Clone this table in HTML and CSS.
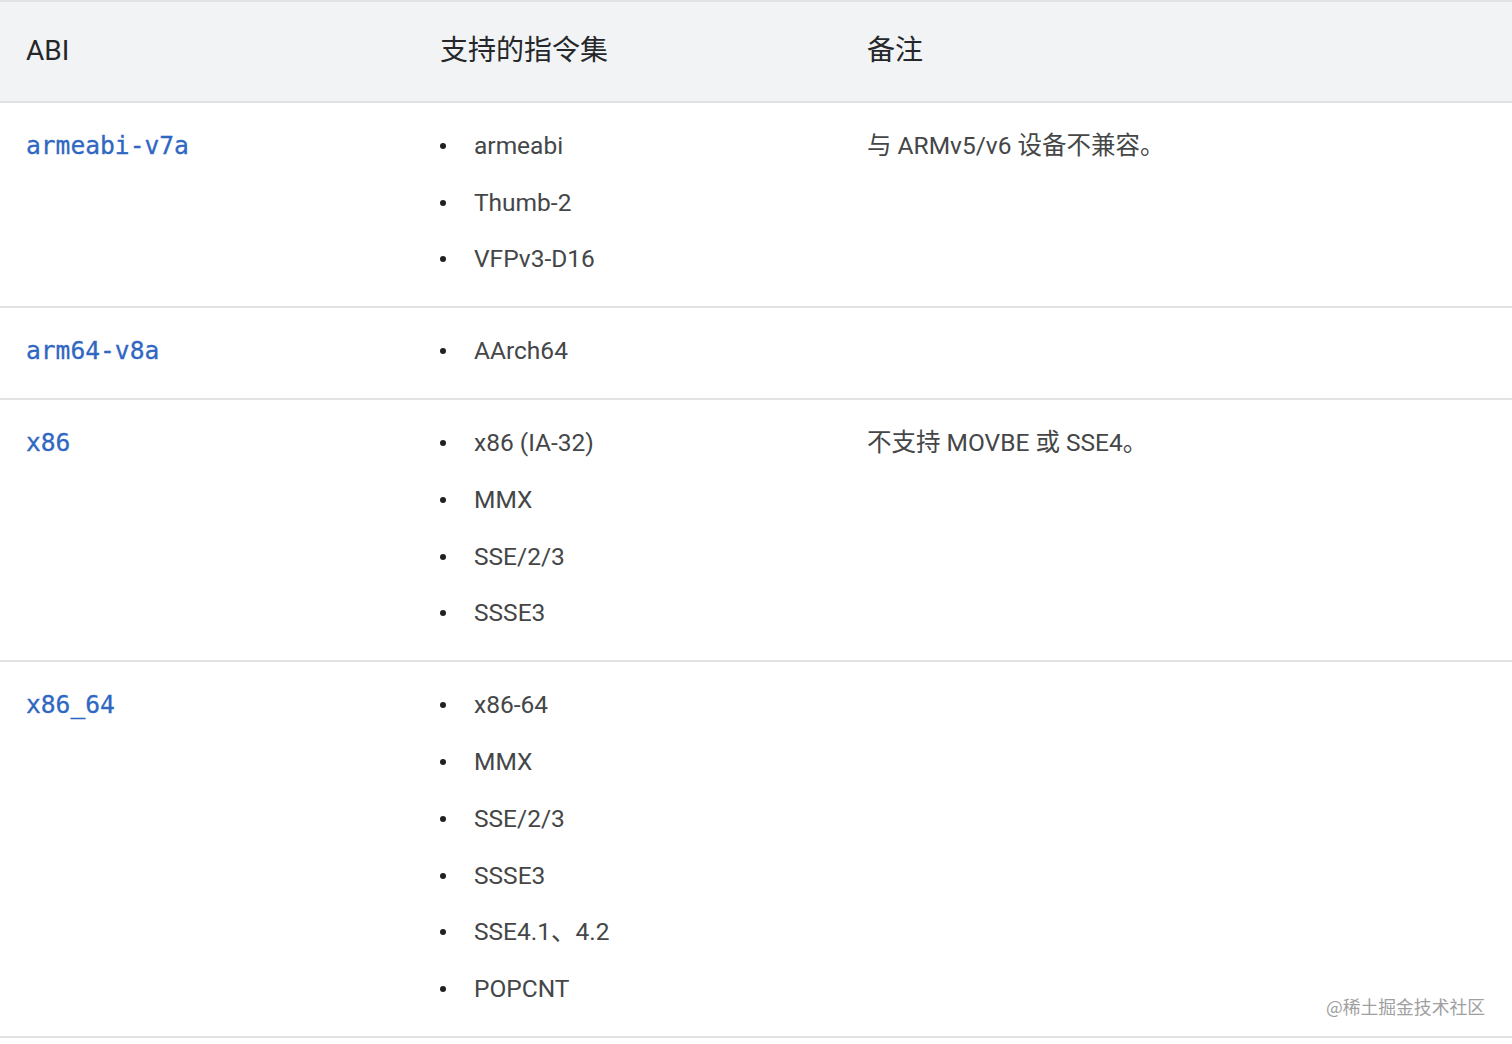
FILE: index.html
```html
<!DOCTYPE html>
<html lang="zh-CN">
<head>
<meta charset="utf-8">
<title>ABI</title>
<link rel="stylesheet" href="styles.css">
</head>
<body>
<div class="page">
  <table class="abi-table">
    <colgroup>
      <col class="c1">
      <col class="c2">
      <col class="c3">
    </colgroup>
    <thead>
      <tr>
        <th>ABI</th>
        <th>支持的指令集</th>
        <th>备注</th>
      </tr>
    </thead>
    <tbody>
      <tr>
        <td><code>armeabi-v7a</code></td>
        <td>
          <ul class="list">
            <li>armeabi</li>
            <li>Thumb-2</li>
            <li>VFPv3-D16</li>
          </ul>
        </td>
        <td><p class="note">与 ARMv5/v6 设备不兼容。</p></td>
      </tr>
      <tr>
        <td><code>arm64-v8a</code></td>
        <td>
          <ul class="list">
            <li>AArch64</li>
          </ul>
        </td>
        <td></td>
      </tr>
      <tr>
        <td><code>x86</code></td>
        <td>
          <ul class="list">
            <li>x86 (IA-32)</li>
            <li>MMX</li>
            <li>SSE/2/3</li>
            <li>SSSE3</li>
          </ul>
        </td>
        <td><p class="note">不支持 MOVBE 或 SSE4。</p></td>
      </tr>
      <tr>
        <td><code>x86_64</code></td>
        <td>
          <ul class="list">
            <li>x86-64</li>
            <li>MMX</li>
            <li>SSE/2/3</li>
            <li>SSSE3</li>
            <li>SSE4.1、4.2</li>
            <li>POPCNT</li>
          </ul>
        </td>
        <td></td>
      </tr>
    </tbody>
  </table>
  <div class="watermark">@稀土掘金技术社区</div>
</div>
</body>
</html>
```
FILE: styles.css
```css
html, body {
  margin: 0;
  padding: 0;
  background: #ffffff;
}

body {
  font-family: Roboto, "Noto Sans CJK SC", sans-serif;
  color: #444648;
}

.page {
  position: relative;
  width: 1512px;
  height: 1044px;
  overflow: hidden;
}

.abi-table {
  width: 1512px;
  border-collapse: collapse;
  table-layout: fixed;
  border-top: 2px solid #e1e2e4;
}

.c1 { width: 414px; }
.c2 { width: 427px; }
.c3 { width: auto; }

.abi-table th {
  background: #f1f3f4;
  color: #25272a;
  font-weight: 400;
  font-size: 28px;
  line-height: 38px;
  text-align: left;
  padding: 30px 26px 31px 26px;
  border-bottom: 2px solid #e1e2e4;
  vertical-align: middle;
}

.abi-table td {
  vertical-align: top;
  padding: 24px 26px 28px 26px;
  border-bottom: 2px solid #e1e2e4;
  font-size: 24.5px;
  line-height: 38px;
}

code {
  font-family: "DejaVu Sans Mono", "Liberation Mono", monospace;
  font-size: 24.6px;
  line-height: 38px;
  color: #2f67c2;
  display: block;
  height: 38px;
  -webkit-text-stroke: 0.3px #2f67c2;
}

.list {
  list-style: none;
  margin: 0;
  padding: 0;
}

.list li {
  display: flex;
  align-items: center;
  height: 38px;
  line-height: 38px;
  color: #444648;
}

.list li + li {
  margin-top: 18.7px;
}

.list li::before {
  content: "";
  width: 6px;
  height: 6px;
  border-radius: 50%;
  background: #202124;
  margin-right: 28px;
  flex: none;
}

.note {
  margin: 0;
  line-height: 38px;
  color: #444648;
}

.watermark {
  position: absolute;
  right: 27px;
  top: 994px;
  font-size: 17.8px;
  line-height: 24px;
  color: #a0a0a0;
  font-family: "Noto Sans CJK SC", sans-serif;
}
```
